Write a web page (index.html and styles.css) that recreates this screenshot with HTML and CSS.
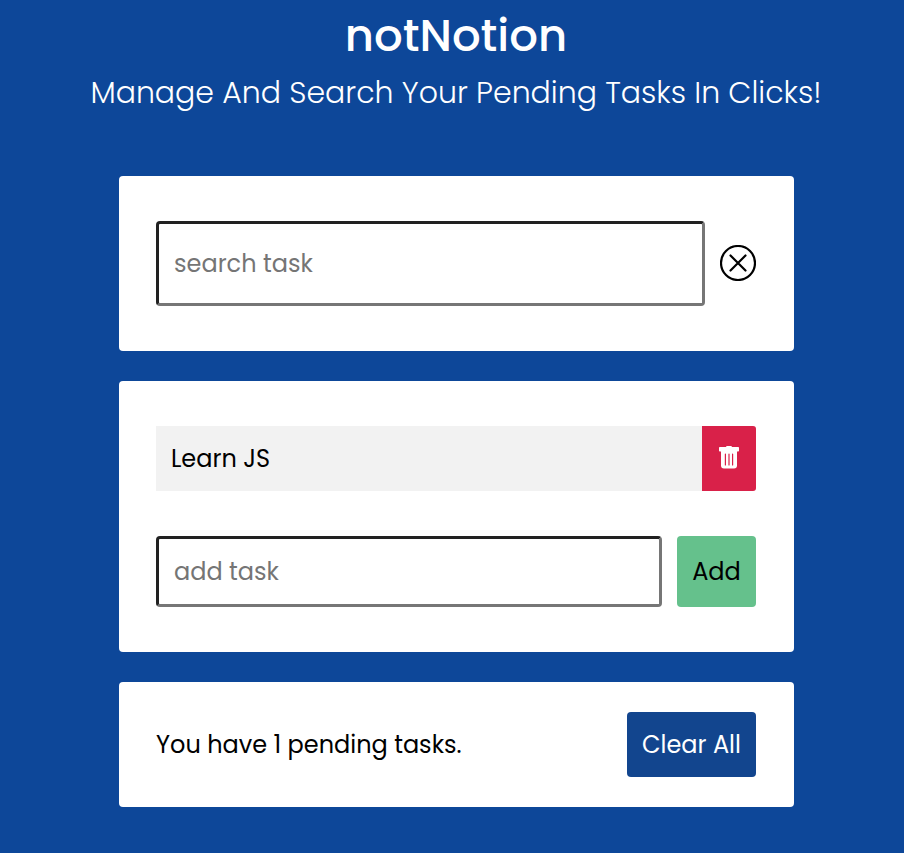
FILE: index.html
```html
<!DOCTYPE html>
<html lang="en">
<head>
<meta charset="utf-8">
<title>notNotion</title>
<link rel="stylesheet" href="styles.css">
</head>
<body>
<header class="header">
  <h1 class="title">notNotion</h1>
  <h2 class="subtitle">Manage And Search Your Pending Tasks In Clicks!</h2>
</header>
<main class="app">
  <section class="card search">
    <input class="field search-field" type="text" placeholder="search task">
    <svg class="clear-icon" viewBox="0 0 36 36" aria-hidden="true">
      <circle cx="18" cy="18" r="17"/>
      <path d="M10.500 10.500l15 15M25.500 10.500l-15 15"/>
    </svg>
  </section>
  <section class="card tasks">
    <div class="task">
      <span class="task-name">Learn JS</span>
      <button class="delete" aria-label="Delete">
        <svg class="trash" viewBox="0 0 20 23" aria-hidden="true">
          <path fill="#fff" d="M0 1.800Q0 1 .8 1H7Q7.200 0 8 0h4Q12.800 0 13 1h6.200Q20 1 20 1.800V4.700Q20 5.500 19.200 5.500H18V19.500Q18 22.500 15 22.500H5Q2 22.500 2 19.500V5.500H.8Q0 5.500 0 4.700z"/>
          <path stroke="#d92149" stroke-width="1.200" stroke-linecap="round" d="M6.400 8v11M10 8v11M13.600 8v11"/>
        </svg>
      </button>
    </div>
    <div class="add-row">
      <input class="field add-field" type="text" placeholder="add task">
      <button class="add">Add</button>
    </div>
  </section>
  <section class="card footer">
    <span class="pending">You have 1 pending tasks.</span>
    <button class="clear-all">Clear All</button>
  </section>
</main>
</body>
</html>
```
FILE: styles.css
```css
* { box-sizing: border-box; margin: 0; padding: 0; }
body {
  min-height: 853px;
  background: #0d4799;
  color: #000;
  font-family: Poppins, Inter, "Open Sans", sans-serif;
  font-size: 24px;
  padding-left: 9px;
}
.header { height: 176px; padding-right: 1px; color: #fff; text-align: center; white-space: nowrap; }
.title { font-size: 45px; font-weight: 500; line-height: 71px; }
.subtitle { font-size: 30px; font-weight: 300; line-height: 43px; }
.app { width: 675px; margin: 0 auto; display: flex; flex-direction: column; gap: 30px; }
.card { background: #fff; border-radius: 4px; padding: 45px 38px 45px 37px; }
.search { display: flex; align-items: center; gap: 15px; height: 175px; }
.field {
  min-width: 0;
  flex: 1;
  border: 3px solid;
  border-color: #212121 #767676 #767676 #212121;
  border-radius: 4px;
  padding: 0 15px;
  background: #fff;
  font: inherit;
  outline: 0;
}
.field::placeholder { color: #757575; opacity: 1; }
.search-field { height: 85px; }
.add-field { height: 71px; }
.clear-icon { width: 36px; height: 36px; margin-bottom: 1px; fill: none; stroke: #000; stroke-width: 2.2; stroke-linecap: round; }
.tasks { height: 271px; display: flex; flex-direction: column; gap: 45px; }
.task { display: flex; height: 65px; background: #f2f2f2; border-radius: 0 3px 3px 0; overflow: hidden; }
.task-name { flex: 1; padding-left: 15px; line-height: 65px; }
button { border: 0; font: inherit; white-space: nowrap; }
.delete { width: 54px; background: #d92149; display: flex; justify-content: center; padding-top: 20px; }
.trash { width: 20px; height: 23px; fill: none; }
.add-row { display: flex; gap: 15px; }
.add { width: 79px; height: 71px; border-radius: 4px; background: #65c18c; color: #000; }
.footer { height: 125px; padding-top: 30px; padding-bottom: 30px; display: flex; justify-content: space-between; align-items: center; }
.clear-all { width: 129px; height: 65px; border-radius: 4px; background: #12458e; color: #fff; }
```
